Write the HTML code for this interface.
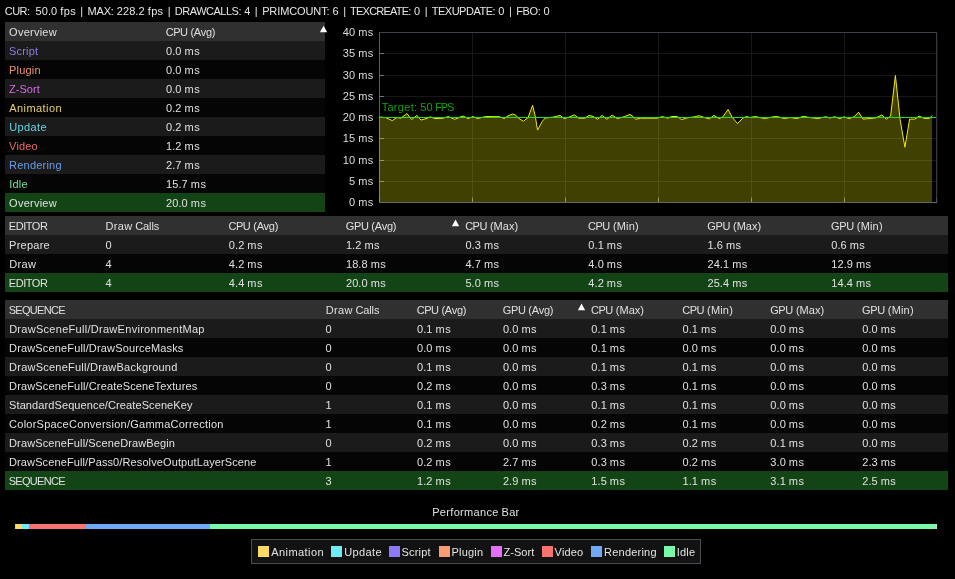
<!DOCTYPE html><html><head><meta charset="utf-8"><style>
html,body{margin:0;padding:0;background:#000;width:955px;height:579px;overflow:hidden}
body{position:relative;font-family:"Liberation Sans",sans-serif;font-size:11px}
#w{position:absolute;left:0;top:0;width:955px;height:579px;will-change:transform}
.tri{position:absolute;width:0;height:0;border-left:3.6px solid transparent;border-right:3.6px solid transparent;border-bottom:6.5px solid #fff}
.t{position:absolute;white-space:pre;line-height:13px}
.t i{position:absolute;font-style:normal;top:0}
</style></head><body><div id="w">
<div style="position:absolute;left:5px;top:22px;width:320px;height:19px;background:#303030"></div>
<svg style="position:absolute;left:0;top:0;overflow:visible" width="1" height="1"><polygon points="319.90,32.30 327.20,32.30 323.55,25.70" fill="#fff"/></svg>
<div style="position:absolute;left:5px;top:41px;width:320px;height:19px;background:#1b1b1b"></div>
<div style="position:absolute;left:5px;top:60px;width:320px;height:19px;background:#050505"></div>
<div style="position:absolute;left:5px;top:79px;width:320px;height:19px;background:#1b1b1b"></div>
<div style="position:absolute;left:5px;top:98px;width:320px;height:19px;background:#050505"></div>
<div style="position:absolute;left:5px;top:117px;width:320px;height:19px;background:#1b1b1b"></div>
<div style="position:absolute;left:5px;top:136px;width:320px;height:19px;background:#050505"></div>
<div style="position:absolute;left:5px;top:155px;width:320px;height:19px;background:#1b1b1b"></div>
<div style="position:absolute;left:5px;top:174px;width:320px;height:19px;background:#050505"></div>
<div style="position:absolute;left:5px;top:193px;width:320px;height:19px;background:#134415"></div>
<div style="position:absolute;left:5px;top:216px;width:943px;height:19px;background:#303030"></div>
<svg style="position:absolute;left:0;top:0;overflow:visible" width="1" height="1"><polygon points="451.90,226.20 459.20,226.20 455.55,219.60" fill="#fff"/></svg>
<div style="position:absolute;left:5px;top:235px;width:943px;height:19px;background:#1b1b1b"></div>
<div style="position:absolute;left:5px;top:254px;width:943px;height:19px;background:#050505"></div>
<div style="position:absolute;left:5px;top:273px;width:943px;height:19px;background:#134415"></div>
<div style="position:absolute;left:5px;top:300px;width:943px;height:19px;background:#303030"></div>
<svg style="position:absolute;left:0;top:0;overflow:visible" width="1" height="1"><polygon points="577.90,310.20 585.20,310.20 581.55,303.60" fill="#fff"/></svg>
<div style="position:absolute;left:5px;top:319px;width:943px;height:19px;background:#1b1b1b"></div>
<div style="position:absolute;left:5px;top:338px;width:943px;height:19px;background:#050505"></div>
<div style="position:absolute;left:5px;top:357px;width:943px;height:19px;background:#1b1b1b"></div>
<div style="position:absolute;left:5px;top:376px;width:943px;height:19px;background:#050505"></div>
<div style="position:absolute;left:5px;top:395px;width:943px;height:19px;background:#1b1b1b"></div>
<div style="position:absolute;left:5px;top:414px;width:943px;height:19px;background:#050505"></div>
<div style="position:absolute;left:5px;top:433px;width:943px;height:19px;background:#1b1b1b"></div>
<div style="position:absolute;left:5px;top:452px;width:943px;height:19px;background:#050505"></div>
<div style="position:absolute;left:5px;top:471px;width:943px;height:19px;background:#134415"></div>
<svg style="position:absolute;left:0;top:0" width="955" height="579">
<line x1="379" y1="181.5" x2="936" y2="181.5" stroke="#171717"/>
<line x1="379" y1="160.5" x2="936" y2="160.5" stroke="#171717"/>
<line x1="379" y1="138.5" x2="936" y2="138.5" stroke="#171717"/>
<line x1="379" y1="117.5" x2="936" y2="117.5" stroke="#171717"/>
<line x1="379" y1="96.5" x2="936" y2="96.5" stroke="#171717"/>
<line x1="379" y1="75.5" x2="936" y2="75.5" stroke="#171717"/>
<line x1="379" y1="53.5" x2="936" y2="53.5" stroke="#171717"/>
<line x1="472.5" y1="32" x2="472.5" y2="202" stroke="#171717"/>
<line x1="565.5" y1="32" x2="565.5" y2="202" stroke="#171717"/>
<line x1="658.5" y1="32" x2="658.5" y2="202" stroke="#171717"/>
<line x1="751.5" y1="32" x2="751.5" y2="202" stroke="#171717"/>
<line x1="844.5" y1="32" x2="844.5" y2="202" stroke="#171717"/>
<line x1="379.5" y1="32" x2="379.5" y2="203" stroke="#5c5c66"/>
<line x1="379" y1="202.5" x2="384" y2="202.5" stroke="#74747a"/>
<line x1="379" y1="181.5" x2="384" y2="181.5" stroke="#74747a"/>
<line x1="379" y1="160.5" x2="384" y2="160.5" stroke="#74747a"/>
<line x1="379" y1="138.5" x2="384" y2="138.5" stroke="#74747a"/>
<line x1="379" y1="117.5" x2="384" y2="117.5" stroke="#74747a"/>
<line x1="379" y1="96.5" x2="384" y2="96.5" stroke="#74747a"/>
<line x1="379" y1="75.5" x2="384" y2="75.5" stroke="#74747a"/>
<line x1="379" y1="53.5" x2="384" y2="53.5" stroke="#74747a"/>
<line x1="379" y1="32.5" x2="384" y2="32.5" stroke="#74747a"/>
<line x1="379.5" y1="197.5" x2="379.5" y2="202.5" stroke="#74747a"/>
<line x1="472.5" y1="197.5" x2="472.5" y2="202.5" stroke="#74747a"/>
<line x1="565.5" y1="197.5" x2="565.5" y2="202.5" stroke="#74747a"/>
<line x1="658.5" y1="197.5" x2="658.5" y2="202.5" stroke="#74747a"/>
<line x1="751.5" y1="197.5" x2="751.5" y2="202.5" stroke="#74747a"/>
<line x1="844.5" y1="197.5" x2="844.5" y2="202.5" stroke="#74747a"/>
<line x1="936.5" y1="197.5" x2="936.5" y2="202.5" stroke="#74747a"/>
<polygon points="379,202 379,117.0 379.5,117.0 385.5,117.5 392.3,120.6 397.0,117.5 400.7,118.2 407.0,113.6 411.6,119.6 416.9,115.4 421.0,120.1 427.4,118.2 430.5,116.8 434.7,118.6 443.0,118.2 448.3,116.5 454.6,119.3 463.0,116.0 468.2,118.6 473.1,116.5 477.3,118.6 485.7,116.5 499.3,116.7 504.6,118.6 506.6,116.5 512.9,114.0 516.0,115.4 518.2,118.0 523.4,121.2 528.1,117.5 532.6,105.3 535.4,117.0 537.5,130.1 542.3,121.2 545.4,118.0 553.8,117.0 560.0,115.4 564.2,118.6 569.2,117.0 574.4,114.9 578.6,118.2 584.9,118.2 589.1,115.4 593.3,116.5 597.5,119.3 602.2,115.4 606.9,119.3 612.1,115.1 617.4,118.6 624.7,116.5 629.9,114.4 633.1,116.5 635.7,119.3 640.4,118.2 657.1,118.2 662.4,116.5 667.9,118.2 671.5,116.5 677.3,116.5 681.5,119.6 687.2,117.8 694.6,116.8 699.3,115.7 702.9,117.0 709.2,118.9 713.9,115.4 719.2,118.6 722.8,116.8 728.1,109.5 732.3,117.5 737.5,123.5 742.7,118.2 746.4,116.5 750.0,117.5 755.3,116.5 764.4,118.6 773.8,116.7 778.0,116.7 784.3,118.6 790.0,117.5 796.9,118.6 803.2,116.3 808.0,117.2 817.8,118.6 825.7,116.7 830.0,118.0 834.6,116.7 839.8,118.6 844.0,116.8 849.2,118.6 854.3,116.7 858.6,112.2 863.0,119.1 867.3,118.7 875.9,117.9 882.0,114.9 886.3,119.2 890.6,116.1 895.4,75.5 900.1,119.6 904.9,147.2 909.6,119.1 914.8,119.1 919.1,116.1 924.3,118.4 929.5,118.4 932.0,115.6 932.0,202" fill="rgba(255,255,0,0.25)"/>
<polyline points="379.5,117.0 385.5,117.5 392.3,120.6 397.0,117.5 400.7,118.2 407.0,113.6 411.6,119.6 416.9,115.4 421.0,120.1 427.4,118.2 430.5,116.8 434.7,118.6 443.0,118.2 448.3,116.5 454.6,119.3 463.0,116.0 468.2,118.6 473.1,116.5 477.3,118.6 485.7,116.5 499.3,116.7 504.6,118.6 506.6,116.5 512.9,114.0 516.0,115.4 518.2,118.0 523.4,121.2 528.1,117.5 532.6,105.3 535.4,117.0 537.5,130.1 542.3,121.2 545.4,118.0 553.8,117.0 560.0,115.4 564.2,118.6 569.2,117.0 574.4,114.9 578.6,118.2 584.9,118.2 589.1,115.4 593.3,116.5 597.5,119.3 602.2,115.4 606.9,119.3 612.1,115.1 617.4,118.6 624.7,116.5 629.9,114.4 633.1,116.5 635.7,119.3 640.4,118.2 657.1,118.2 662.4,116.5 667.9,118.2 671.5,116.5 677.3,116.5 681.5,119.6 687.2,117.8 694.6,116.8 699.3,115.7 702.9,117.0 709.2,118.9 713.9,115.4 719.2,118.6 722.8,116.8 728.1,109.5 732.3,117.5 737.5,123.5 742.7,118.2 746.4,116.5 750.0,117.5 755.3,116.5 764.4,118.6 773.8,116.7 778.0,116.7 784.3,118.6 790.0,117.5 796.9,118.6 803.2,116.3 808.0,117.2 817.8,118.6 825.7,116.7 830.0,118.0 834.6,116.7 839.8,118.6 844.0,116.8 849.2,118.6 854.3,116.7 858.6,112.2 863.0,119.1 867.3,118.7 875.9,117.9 882.0,114.9 886.3,119.2 890.6,116.1 895.4,75.5 900.1,119.6 904.9,147.2 909.6,119.1 914.8,119.1 919.1,116.1 924.3,118.4 929.5,118.4 932.0,115.6" fill="none" stroke="#f2ec00" stroke-width="1.0" stroke-linejoin="round"/>
<line x1="379" y1="117.5" x2="936" y2="117.5" stroke="#1ee01e" stroke-width="1.2"/>
<line x1="379" y1="32.5" x2="937" y2="32.5" stroke="#40404a"/>
<line x1="936.7" y1="32" x2="936.7" y2="203" stroke="#464650"/>
<line x1="379" y1="202.5" x2="937" y2="202.5" stroke="#686868"/>
</svg>
<div style="position:absolute;left:15px;top:524px;width:7.1px;height:5px;background:#fad964"></div>
<div style="position:absolute;left:22.1px;top:524px;width:7.3px;height:5px;background:#70ecf8"></div>
<div style="position:absolute;left:29.4px;top:524px;width:56.5px;height:5px;background:#f87272"></div>
<div style="position:absolute;left:85.9px;top:524px;width:123.9px;height:5px;background:#70a8f8"></div>
<div style="position:absolute;left:209.8px;top:524px;width:727.2px;height:5px;background:#78f8a8"></div>
<div style="position:absolute;left:15px;top:524px;width:1px;height:5px;background:#d6cc90"></div>
<div style="position:absolute;left:936px;top:524px;width:1px;height:5px;background:#b4e6c6"></div>
<div style="position:absolute;left:251px;top:539px;width:448px;height:23px;border:1px solid #4a4a52;background:#121212"></div>
<div style="position:absolute;left:258px;top:546px;width:11px;height:11px;background:#fad964"></div>
<div style="position:absolute;left:331px;top:546px;width:11px;height:11px;background:#70ecf8"></div>
<div style="position:absolute;left:389px;top:546px;width:11px;height:11px;background:#8f78f8"></div>
<div style="position:absolute;left:439px;top:546px;width:11px;height:11px;background:#f89c74"></div>
<div style="position:absolute;left:491px;top:546px;width:11px;height:11px;background:#e470f8"></div>
<div style="position:absolute;left:542px;top:546px;width:11px;height:11px;background:#f87272"></div>
<div style="position:absolute;left:591px;top:546px;width:11px;height:11px;background:#70a8f8"></div>
<div style="position:absolute;left:664px;top:546px;width:11px;height:11px;background:#78f8a8"></div>
<div class="t" style="left:5.00px;top:5.00px;color:#e6e6e6"><i style="left:-0.26px;letter-spacing:-0.527px">CUR:</i><i style="left:30.54px;letter-spacing:0.094px">50.0</i><i style="left:55.32px;letter-spacing:0.343px">fps</i><i style="left:75.32px;letter-spacing:3.199px">|</i><i style="left:82.54px;letter-spacing:-0.190px">MAX:</i><i style="left:111.70px;letter-spacing:0.111px">228.2</i><i style="left:142.76px;letter-spacing:0.343px">fps</i><i style="left:162.76px;letter-spacing:3.199px">|</i><i style="left:169.83px;letter-spacing:-0.492px">DRAWCALLS:</i><i style="left:239.21px;letter-spacing:0.165px">4</i><i style="left:249.87px;letter-spacing:3.199px">|</i><i style="left:257.14px;letter-spacing:-0.107px">PRIMCOUNT:</i><i style="left:327.51px;letter-spacing:0.165px">6</i><i style="left:338.17px;letter-spacing:3.199px">|</i><i style="left:345.10px;letter-spacing:-0.772px">TEXCREATE:</i><i style="left:408.97px;letter-spacing:0.165px">0</i><i style="left:419.64px;letter-spacing:3.199px">|</i><i style="left:426.71px;letter-spacing:-0.482px">TEXUPDATE:</i><i style="left:493.34px;letter-spacing:0.165px">0</i><i style="left:504.00px;letter-spacing:3.199px">|</i><i style="left:511.15px;letter-spacing:-0.343px">FBO:</i><i style="left:538.56px;letter-spacing:0.165px">0</i></div>
<div class="t" style="left:9.12px;top:26.00px;color:#e0e0e0;letter-spacing:0.240px">Overview</div>
<div class="t" style="left:166.00px;top:26.00px;color:#e0e0e0"><i style="left:-0.26px;letter-spacing:-0.519px">CPU</i><i style="left:24.42px;letter-spacing:-0.239px">(Avg)</i></div>
<div class="t" style="left:9.09px;top:45.00px;color:#8c7ce8;letter-spacing:0.174px">Script</div>
<div class="t" style="left:166.00px;top:45.00px;color:#e0e0e0"><i style="left:0.03px;letter-spacing:0.070px">0.0</i><i style="left:18.57px;letter-spacing:0.404px">ms</i></div>
<div class="t" style="left:9.09px;top:64.00px;color:#eb9472;letter-spacing:0.190px">Plugin</div>
<div class="t" style="left:166.00px;top:64.00px;color:#e0e0e0"><i style="left:0.03px;letter-spacing:0.070px">0.0</i><i style="left:18.57px;letter-spacing:0.404px">ms</i></div>
<div class="t" style="left:9.02px;top:83.00px;color:#d86ae8;letter-spacing:0.046px">Z-Sort</div>
<div class="t" style="left:166.00px;top:83.00px;color:#e0e0e0"><i style="left:0.03px;letter-spacing:0.070px">0.0</i><i style="left:18.57px;letter-spacing:0.404px">ms</i></div>
<div class="t" style="left:9.22px;top:102.00px;color:#e8d070;letter-spacing:0.443px">Animation</div>
<div class="t" style="left:166.00px;top:102.00px;color:#e0e0e0"><i style="left:0.03px;letter-spacing:0.070px">0.2</i><i style="left:18.57px;letter-spacing:0.404px">ms</i></div>
<div class="t" style="left:9.19px;top:121.00px;color:#66d4e4;letter-spacing:0.381px">Update</div>
<div class="t" style="left:166.00px;top:121.00px;color:#e0e0e0"><i style="left:0.03px;letter-spacing:0.070px">0.2</i><i style="left:18.57px;letter-spacing:0.404px">ms</i></div>
<div class="t" style="left:9.09px;top:140.00px;color:#e86a6a;letter-spacing:0.182px">Video</div>
<div class="t" style="left:166.00px;top:140.00px;color:#e0e0e0"><i style="left:0.03px;letter-spacing:0.070px">1.2</i><i style="left:18.57px;letter-spacing:0.404px">ms</i></div>
<div class="t" style="left:9.11px;top:159.00px;color:#6a9ce8;letter-spacing:0.213px">Rendering</div>
<div class="t" style="left:166.00px;top:159.00px;color:#e0e0e0"><i style="left:0.03px;letter-spacing:0.070px">2.7</i><i style="left:18.57px;letter-spacing:0.404px">ms</i></div>
<div class="t" style="left:9.13px;top:178.00px;color:#72e29a;letter-spacing:0.253px">Idle</div>
<div class="t" style="left:166.00px;top:178.00px;color:#e0e0e0"><i style="left:0.05px;letter-spacing:0.094px">15.7</i><i style="left:24.86px;letter-spacing:0.404px">ms</i></div>
<div class="t" style="left:9.12px;top:197.00px;color:#e0e0e0;letter-spacing:0.240px">Overview</div>
<div class="t" style="left:166.00px;top:197.00px;color:#e0e0e0"><i style="left:0.05px;letter-spacing:0.094px">20.0</i><i style="left:24.86px;letter-spacing:0.404px">ms</i></div>
<div class="t" style="left:8.78px;top:220.00px;color:#e0e0e0;letter-spacing:-0.445px">EDITOR</div>
<div class="t" style="left:105.30px;top:220.00px;color:#e0e0e0"><i style="left:0.19px;letter-spacing:0.378px">Draw</i><i style="left:29.98px;letter-spacing:-0.117px">Calls</i></div>
<div class="t" style="left:228.80px;top:220.00px;color:#e0e0e0"><i style="left:-0.26px;letter-spacing:-0.519px">CPU</i><i style="left:24.42px;letter-spacing:-0.239px">(Avg)</i></div>
<div class="t" style="left:345.90px;top:220.00px;color:#e0e0e0"><i style="left:-0.18px;letter-spacing:-0.366px">GPU</i><i style="left:25.48px;letter-spacing:-0.239px">(Avg)</i></div>
<div class="t" style="left:465.40px;top:220.00px;color:#e0e0e0"><i style="left:-0.26px;letter-spacing:-0.519px">CPU</i><i style="left:24.55px;letter-spacing:0.021px">(Max)</i></div>
<div class="t" style="left:588.30px;top:220.00px;color:#e0e0e0"><i style="left:-0.26px;letter-spacing:-0.519px">CPU</i><i style="left:24.62px;letter-spacing:0.161px">(Min)</i></div>
<div class="t" style="left:707.40px;top:220.00px;color:#e0e0e0"><i style="left:-0.18px;letter-spacing:-0.366px">GPU</i><i style="left:25.61px;letter-spacing:0.021px">(Max)</i></div>
<div class="t" style="left:831.20px;top:220.00px;color:#e0e0e0"><i style="left:-0.18px;letter-spacing:-0.366px">GPU</i><i style="left:25.68px;letter-spacing:0.161px">(Min)</i></div>
<div class="t" style="left:9.12px;top:239.00px;color:#e0e0e0;letter-spacing:0.238px">Prepare</div>
<div class="t" style="left:105.38px;top:239.00px;color:#e0e0e0;letter-spacing:0.165px">0</div>
<div class="t" style="left:228.80px;top:239.00px;color:#e0e0e0"><i style="left:0.03px;letter-spacing:0.070px">0.2</i><i style="left:18.57px;letter-spacing:0.404px">ms</i></div>
<div class="t" style="left:345.90px;top:239.00px;color:#e0e0e0"><i style="left:0.03px;letter-spacing:0.070px">1.2</i><i style="left:18.57px;letter-spacing:0.404px">ms</i></div>
<div class="t" style="left:465.40px;top:239.00px;color:#e0e0e0"><i style="left:0.03px;letter-spacing:0.070px">0.3</i><i style="left:18.57px;letter-spacing:0.404px">ms</i></div>
<div class="t" style="left:588.30px;top:239.00px;color:#e0e0e0"><i style="left:0.03px;letter-spacing:0.070px">0.1</i><i style="left:18.57px;letter-spacing:0.404px">ms</i></div>
<div class="t" style="left:707.40px;top:239.00px;color:#e0e0e0"><i style="left:0.03px;letter-spacing:0.070px">1.6</i><i style="left:18.57px;letter-spacing:0.404px">ms</i></div>
<div class="t" style="left:831.20px;top:239.00px;color:#e0e0e0"><i style="left:0.03px;letter-spacing:0.070px">0.6</i><i style="left:18.57px;letter-spacing:0.404px">ms</i></div>
<div class="t" style="left:9.19px;top:258.00px;color:#e0e0e0;letter-spacing:0.378px">Draw</div>
<div class="t" style="left:105.38px;top:258.00px;color:#e0e0e0;letter-spacing:0.165px">4</div>
<div class="t" style="left:228.80px;top:258.00px;color:#e0e0e0"><i style="left:0.03px;letter-spacing:0.070px">4.2</i><i style="left:18.57px;letter-spacing:0.404px">ms</i></div>
<div class="t" style="left:345.90px;top:258.00px;color:#e0e0e0"><i style="left:0.05px;letter-spacing:0.094px">18.8</i><i style="left:24.86px;letter-spacing:0.404px">ms</i></div>
<div class="t" style="left:465.40px;top:258.00px;color:#e0e0e0"><i style="left:0.03px;letter-spacing:0.070px">4.7</i><i style="left:18.57px;letter-spacing:0.404px">ms</i></div>
<div class="t" style="left:588.30px;top:258.00px;color:#e0e0e0"><i style="left:0.03px;letter-spacing:0.070px">4.0</i><i style="left:18.57px;letter-spacing:0.404px">ms</i></div>
<div class="t" style="left:707.40px;top:258.00px;color:#e0e0e0"><i style="left:0.05px;letter-spacing:0.094px">24.1</i><i style="left:24.86px;letter-spacing:0.404px">ms</i></div>
<div class="t" style="left:831.20px;top:258.00px;color:#e0e0e0"><i style="left:0.05px;letter-spacing:0.094px">12.9</i><i style="left:24.86px;letter-spacing:0.404px">ms</i></div>
<div class="t" style="left:8.78px;top:277.00px;color:#e0e0e0;letter-spacing:-0.445px">EDITOR</div>
<div class="t" style="left:105.38px;top:277.00px;color:#e0e0e0;letter-spacing:0.165px">4</div>
<div class="t" style="left:228.80px;top:277.00px;color:#e0e0e0"><i style="left:0.03px;letter-spacing:0.070px">4.4</i><i style="left:18.57px;letter-spacing:0.404px">ms</i></div>
<div class="t" style="left:345.90px;top:277.00px;color:#e0e0e0"><i style="left:0.05px;letter-spacing:0.094px">20.0</i><i style="left:24.86px;letter-spacing:0.404px">ms</i></div>
<div class="t" style="left:465.40px;top:277.00px;color:#e0e0e0"><i style="left:0.03px;letter-spacing:0.070px">5.0</i><i style="left:18.57px;letter-spacing:0.404px">ms</i></div>
<div class="t" style="left:588.30px;top:277.00px;color:#e0e0e0"><i style="left:0.03px;letter-spacing:0.070px">4.2</i><i style="left:18.57px;letter-spacing:0.404px">ms</i></div>
<div class="t" style="left:707.40px;top:277.00px;color:#e0e0e0"><i style="left:0.05px;letter-spacing:0.094px">25.4</i><i style="left:24.86px;letter-spacing:0.404px">ms</i></div>
<div class="t" style="left:831.20px;top:277.00px;color:#e0e0e0"><i style="left:0.05px;letter-spacing:0.094px">14.4</i><i style="left:24.86px;letter-spacing:0.404px">ms</i></div>
<div class="t" style="left:8.66px;top:304.00px;color:#e0e0e0;letter-spacing:-0.681px">SEQUENCE</div>
<div class="t" style="left:325.50px;top:304.00px;color:#e0e0e0"><i style="left:0.19px;letter-spacing:0.378px">Draw</i><i style="left:29.98px;letter-spacing:-0.117px">Calls</i></div>
<div class="t" style="left:417.00px;top:304.00px;color:#e0e0e0"><i style="left:-0.26px;letter-spacing:-0.519px">CPU</i><i style="left:24.42px;letter-spacing:-0.239px">(Avg)</i></div>
<div class="t" style="left:502.90px;top:304.00px;color:#e0e0e0"><i style="left:-0.18px;letter-spacing:-0.366px">GPU</i><i style="left:25.48px;letter-spacing:-0.239px">(Avg)</i></div>
<div class="t" style="left:591.30px;top:304.00px;color:#e0e0e0"><i style="left:-0.26px;letter-spacing:-0.519px">CPU</i><i style="left:24.55px;letter-spacing:0.021px">(Max)</i></div>
<div class="t" style="left:682.50px;top:304.00px;color:#e0e0e0"><i style="left:-0.26px;letter-spacing:-0.519px">CPU</i><i style="left:24.62px;letter-spacing:0.161px">(Min)</i></div>
<div class="t" style="left:770.30px;top:304.00px;color:#e0e0e0"><i style="left:-0.18px;letter-spacing:-0.366px">GPU</i><i style="left:25.61px;letter-spacing:0.021px">(Max)</i></div>
<div class="t" style="left:862.20px;top:304.00px;color:#e0e0e0"><i style="left:-0.18px;letter-spacing:-0.366px">GPU</i><i style="left:25.68px;letter-spacing:0.161px">(Min)</i></div>
<div class="t" style="left:9.14px;top:323.00px;color:#e0e0e0;letter-spacing:0.287px">DrawSceneFull/DrawEnvironmentMap</div>
<div class="t" style="left:325.58px;top:323.00px;color:#e0e0e0;letter-spacing:0.165px">0</div>
<div class="t" style="left:417.00px;top:323.00px;color:#e0e0e0"><i style="left:0.03px;letter-spacing:0.070px">0.1</i><i style="left:18.57px;letter-spacing:0.404px">ms</i></div>
<div class="t" style="left:502.90px;top:323.00px;color:#e0e0e0"><i style="left:0.03px;letter-spacing:0.070px">0.0</i><i style="left:18.57px;letter-spacing:0.404px">ms</i></div>
<div class="t" style="left:591.30px;top:323.00px;color:#e0e0e0"><i style="left:0.03px;letter-spacing:0.070px">0.1</i><i style="left:18.57px;letter-spacing:0.404px">ms</i></div>
<div class="t" style="left:682.50px;top:323.00px;color:#e0e0e0"><i style="left:0.03px;letter-spacing:0.070px">0.1</i><i style="left:18.57px;letter-spacing:0.404px">ms</i></div>
<div class="t" style="left:770.30px;top:323.00px;color:#e0e0e0"><i style="left:0.03px;letter-spacing:0.070px">0.0</i><i style="left:18.57px;letter-spacing:0.404px">ms</i></div>
<div class="t" style="left:862.20px;top:323.00px;color:#e0e0e0"><i style="left:0.03px;letter-spacing:0.070px">0.0</i><i style="left:18.57px;letter-spacing:0.404px">ms</i></div>
<div class="t" style="left:9.08px;top:342.00px;color:#e0e0e0;letter-spacing:0.154px">DrawSceneFull/DrawSourceMasks</div>
<div class="t" style="left:325.58px;top:342.00px;color:#e0e0e0;letter-spacing:0.165px">0</div>
<div class="t" style="left:417.00px;top:342.00px;color:#e0e0e0"><i style="left:0.03px;letter-spacing:0.070px">0.0</i><i style="left:18.57px;letter-spacing:0.404px">ms</i></div>
<div class="t" style="left:502.90px;top:342.00px;color:#e0e0e0"><i style="left:0.03px;letter-spacing:0.070px">0.0</i><i style="left:18.57px;letter-spacing:0.404px">ms</i></div>
<div class="t" style="left:591.30px;top:342.00px;color:#e0e0e0"><i style="left:0.03px;letter-spacing:0.070px">0.1</i><i style="left:18.57px;letter-spacing:0.404px">ms</i></div>
<div class="t" style="left:682.50px;top:342.00px;color:#e0e0e0"><i style="left:0.03px;letter-spacing:0.070px">0.0</i><i style="left:18.57px;letter-spacing:0.404px">ms</i></div>
<div class="t" style="left:770.30px;top:342.00px;color:#e0e0e0"><i style="left:0.03px;letter-spacing:0.070px">0.0</i><i style="left:18.57px;letter-spacing:0.404px">ms</i></div>
<div class="t" style="left:862.20px;top:342.00px;color:#e0e0e0"><i style="left:0.03px;letter-spacing:0.070px">0.0</i><i style="left:18.57px;letter-spacing:0.404px">ms</i></div>
<div class="t" style="left:9.11px;top:361.00px;color:#e0e0e0;letter-spacing:0.229px">DrawSceneFull/DrawBackground</div>
<div class="t" style="left:325.58px;top:361.00px;color:#e0e0e0;letter-spacing:0.165px">0</div>
<div class="t" style="left:417.00px;top:361.00px;color:#e0e0e0"><i style="left:0.03px;letter-spacing:0.070px">0.1</i><i style="left:18.57px;letter-spacing:0.404px">ms</i></div>
<div class="t" style="left:502.90px;top:361.00px;color:#e0e0e0"><i style="left:0.03px;letter-spacing:0.070px">0.0</i><i style="left:18.57px;letter-spacing:0.404px">ms</i></div>
<div class="t" style="left:591.30px;top:361.00px;color:#e0e0e0"><i style="left:0.03px;letter-spacing:0.070px">0.1</i><i style="left:18.57px;letter-spacing:0.404px">ms</i></div>
<div class="t" style="left:682.50px;top:361.00px;color:#e0e0e0"><i style="left:0.03px;letter-spacing:0.070px">0.1</i><i style="left:18.57px;letter-spacing:0.404px">ms</i></div>
<div class="t" style="left:770.30px;top:361.00px;color:#e0e0e0"><i style="left:0.03px;letter-spacing:0.070px">0.0</i><i style="left:18.57px;letter-spacing:0.404px">ms</i></div>
<div class="t" style="left:862.20px;top:361.00px;color:#e0e0e0"><i style="left:0.03px;letter-spacing:0.070px">0.0</i><i style="left:18.57px;letter-spacing:0.404px">ms</i></div>
<div class="t" style="left:9.07px;top:380.00px;color:#e0e0e0;letter-spacing:0.148px">DrawSceneFull/CreateSceneTextures</div>
<div class="t" style="left:325.58px;top:380.00px;color:#e0e0e0;letter-spacing:0.165px">0</div>
<div class="t" style="left:417.00px;top:380.00px;color:#e0e0e0"><i style="left:0.03px;letter-spacing:0.070px">0.2</i><i style="left:18.57px;letter-spacing:0.404px">ms</i></div>
<div class="t" style="left:502.90px;top:380.00px;color:#e0e0e0"><i style="left:0.03px;letter-spacing:0.070px">0.0</i><i style="left:18.57px;letter-spacing:0.404px">ms</i></div>
<div class="t" style="left:591.30px;top:380.00px;color:#e0e0e0"><i style="left:0.03px;letter-spacing:0.070px">0.3</i><i style="left:18.57px;letter-spacing:0.404px">ms</i></div>
<div class="t" style="left:682.50px;top:380.00px;color:#e0e0e0"><i style="left:0.03px;letter-spacing:0.070px">0.1</i><i style="left:18.57px;letter-spacing:0.404px">ms</i></div>
<div class="t" style="left:770.30px;top:380.00px;color:#e0e0e0"><i style="left:0.03px;letter-spacing:0.070px">0.0</i><i style="left:18.57px;letter-spacing:0.404px">ms</i></div>
<div class="t" style="left:862.20px;top:380.00px;color:#e0e0e0"><i style="left:0.03px;letter-spacing:0.070px">0.0</i><i style="left:18.57px;letter-spacing:0.404px">ms</i></div>
<div class="t" style="left:9.05px;top:399.00px;color:#e0e0e0;letter-spacing:0.101px">StandardSequence/CreateSceneKey</div>
<div class="t" style="left:325.58px;top:399.00px;color:#e0e0e0;letter-spacing:0.165px">1</div>
<div class="t" style="left:417.00px;top:399.00px;color:#e0e0e0"><i style="left:0.03px;letter-spacing:0.070px">0.1</i><i style="left:18.57px;letter-spacing:0.404px">ms</i></div>
<div class="t" style="left:502.90px;top:399.00px;color:#e0e0e0"><i style="left:0.03px;letter-spacing:0.070px">0.0</i><i style="left:18.57px;letter-spacing:0.404px">ms</i></div>
<div class="t" style="left:591.30px;top:399.00px;color:#e0e0e0"><i style="left:0.03px;letter-spacing:0.070px">0.1</i><i style="left:18.57px;letter-spacing:0.404px">ms</i></div>
<div class="t" style="left:682.50px;top:399.00px;color:#e0e0e0"><i style="left:0.03px;letter-spacing:0.070px">0.1</i><i style="left:18.57px;letter-spacing:0.404px">ms</i></div>
<div class="t" style="left:770.30px;top:399.00px;color:#e0e0e0"><i style="left:0.03px;letter-spacing:0.070px">0.0</i><i style="left:18.57px;letter-spacing:0.404px">ms</i></div>
<div class="t" style="left:862.20px;top:399.00px;color:#e0e0e0"><i style="left:0.03px;letter-spacing:0.070px">0.0</i><i style="left:18.57px;letter-spacing:0.404px">ms</i></div>
<div class="t" style="left:9.12px;top:418.00px;color:#e0e0e0;letter-spacing:0.236px">ColorSpaceConversion/GammaCorrection</div>
<div class="t" style="left:325.58px;top:418.00px;color:#e0e0e0;letter-spacing:0.165px">1</div>
<div class="t" style="left:417.00px;top:418.00px;color:#e0e0e0"><i style="left:0.03px;letter-spacing:0.070px">0.1</i><i style="left:18.57px;letter-spacing:0.404px">ms</i></div>
<div class="t" style="left:502.90px;top:418.00px;color:#e0e0e0"><i style="left:0.03px;letter-spacing:0.070px">0.0</i><i style="left:18.57px;letter-spacing:0.404px">ms</i></div>
<div class="t" style="left:591.30px;top:418.00px;color:#e0e0e0"><i style="left:0.03px;letter-spacing:0.070px">0.2</i><i style="left:18.57px;letter-spacing:0.404px">ms</i></div>
<div class="t" style="left:682.50px;top:418.00px;color:#e0e0e0"><i style="left:0.03px;letter-spacing:0.070px">0.1</i><i style="left:18.57px;letter-spacing:0.404px">ms</i></div>
<div class="t" style="left:770.30px;top:418.00px;color:#e0e0e0"><i style="left:0.03px;letter-spacing:0.070px">0.0</i><i style="left:18.57px;letter-spacing:0.404px">ms</i></div>
<div class="t" style="left:862.20px;top:418.00px;color:#e0e0e0"><i style="left:0.03px;letter-spacing:0.070px">0.0</i><i style="left:18.57px;letter-spacing:0.404px">ms</i></div>
<div class="t" style="left:9.06px;top:437.00px;color:#e0e0e0;letter-spacing:0.120px">DrawSceneFull/SceneDrawBegin</div>
<div class="t" style="left:325.58px;top:437.00px;color:#e0e0e0;letter-spacing:0.165px">0</div>
<div class="t" style="left:417.00px;top:437.00px;color:#e0e0e0"><i style="left:0.03px;letter-spacing:0.070px">0.2</i><i style="left:18.57px;letter-spacing:0.404px">ms</i></div>
<div class="t" style="left:502.90px;top:437.00px;color:#e0e0e0"><i style="left:0.03px;letter-spacing:0.070px">0.0</i><i style="left:18.57px;letter-spacing:0.404px">ms</i></div>
<div class="t" style="left:591.30px;top:437.00px;color:#e0e0e0"><i style="left:0.03px;letter-spacing:0.070px">0.3</i><i style="left:18.57px;letter-spacing:0.404px">ms</i></div>
<div class="t" style="left:682.50px;top:437.00px;color:#e0e0e0"><i style="left:0.03px;letter-spacing:0.070px">0.2</i><i style="left:18.57px;letter-spacing:0.404px">ms</i></div>
<div class="t" style="left:770.30px;top:437.00px;color:#e0e0e0"><i style="left:0.03px;letter-spacing:0.070px">0.1</i><i style="left:18.57px;letter-spacing:0.404px">ms</i></div>
<div class="t" style="left:862.20px;top:437.00px;color:#e0e0e0"><i style="left:0.03px;letter-spacing:0.070px">0.0</i><i style="left:18.57px;letter-spacing:0.404px">ms</i></div>
<div class="t" style="left:9.05px;top:456.00px;color:#e0e0e0;letter-spacing:0.109px">DrawSceneFull/Pass0/ResolveOutputLayerScene</div>
<div class="t" style="left:325.58px;top:456.00px;color:#e0e0e0;letter-spacing:0.165px">1</div>
<div class="t" style="left:417.00px;top:456.00px;color:#e0e0e0"><i style="left:0.03px;letter-spacing:0.070px">0.2</i><i style="left:18.57px;letter-spacing:0.404px">ms</i></div>
<div class="t" style="left:502.90px;top:456.00px;color:#e0e0e0"><i style="left:0.03px;letter-spacing:0.070px">2.7</i><i style="left:18.57px;letter-spacing:0.404px">ms</i></div>
<div class="t" style="left:591.30px;top:456.00px;color:#e0e0e0"><i style="left:0.03px;letter-spacing:0.070px">0.3</i><i style="left:18.57px;letter-spacing:0.404px">ms</i></div>
<div class="t" style="left:682.50px;top:456.00px;color:#e0e0e0"><i style="left:0.03px;letter-spacing:0.070px">0.2</i><i style="left:18.57px;letter-spacing:0.404px">ms</i></div>
<div class="t" style="left:770.30px;top:456.00px;color:#e0e0e0"><i style="left:0.03px;letter-spacing:0.070px">3.0</i><i style="left:18.57px;letter-spacing:0.404px">ms</i></div>
<div class="t" style="left:862.20px;top:456.00px;color:#e0e0e0"><i style="left:0.03px;letter-spacing:0.070px">2.3</i><i style="left:18.57px;letter-spacing:0.404px">ms</i></div>
<div class="t" style="left:8.66px;top:475.00px;color:#e0e0e0;letter-spacing:-0.681px">SEQUENCE</div>
<div class="t" style="left:325.58px;top:475.00px;color:#e0e0e0;letter-spacing:0.165px">3</div>
<div class="t" style="left:417.00px;top:475.00px;color:#e0e0e0"><i style="left:0.03px;letter-spacing:0.070px">1.2</i><i style="left:18.57px;letter-spacing:0.404px">ms</i></div>
<div class="t" style="left:502.90px;top:475.00px;color:#e0e0e0"><i style="left:0.03px;letter-spacing:0.070px">2.9</i><i style="left:18.57px;letter-spacing:0.404px">ms</i></div>
<div class="t" style="left:591.30px;top:475.00px;color:#e0e0e0"><i style="left:0.03px;letter-spacing:0.070px">1.5</i><i style="left:18.57px;letter-spacing:0.404px">ms</i></div>
<div class="t" style="left:682.50px;top:475.00px;color:#e0e0e0"><i style="left:0.03px;letter-spacing:0.070px">1.1</i><i style="left:18.57px;letter-spacing:0.404px">ms</i></div>
<div class="t" style="left:770.30px;top:475.00px;color:#e0e0e0"><i style="left:0.03px;letter-spacing:0.070px">3.1</i><i style="left:18.57px;letter-spacing:0.404px">ms</i></div>
<div class="t" style="left:862.20px;top:475.00px;color:#e0e0e0"><i style="left:0.03px;letter-spacing:0.070px">2.5</i><i style="left:18.57px;letter-spacing:0.404px">ms</i></div>
<div class="t" style="left:342.58px;top:26.00px;color:#dcdcdc"><i style="left:0.08px;letter-spacing:0.165px">40</i><i style="left:15.64px;letter-spacing:0.404px">ms</i></div>
<div class="t" style="left:342.58px;top:47.25px;color:#dcdcdc"><i style="left:0.08px;letter-spacing:0.165px">35</i><i style="left:15.64px;letter-spacing:0.404px">ms</i></div>
<div class="t" style="left:342.58px;top:68.50px;color:#dcdcdc"><i style="left:0.08px;letter-spacing:0.165px">30</i><i style="left:15.64px;letter-spacing:0.404px">ms</i></div>
<div class="t" style="left:342.58px;top:89.75px;color:#dcdcdc"><i style="left:0.08px;letter-spacing:0.165px">25</i><i style="left:15.64px;letter-spacing:0.404px">ms</i></div>
<div class="t" style="left:342.58px;top:111.00px;color:#dcdcdc"><i style="left:0.08px;letter-spacing:0.165px">20</i><i style="left:15.64px;letter-spacing:0.404px">ms</i></div>
<div class="t" style="left:342.58px;top:132.25px;color:#dcdcdc"><i style="left:0.08px;letter-spacing:0.165px">15</i><i style="left:15.64px;letter-spacing:0.404px">ms</i></div>
<div class="t" style="left:342.58px;top:153.50px;color:#dcdcdc"><i style="left:0.08px;letter-spacing:0.165px">10</i><i style="left:15.64px;letter-spacing:0.404px">ms</i></div>
<div class="t" style="left:348.87px;top:174.75px;color:#dcdcdc"><i style="left:0.08px;letter-spacing:0.165px">5</i><i style="left:9.35px;letter-spacing:0.404px">ms</i></div>
<div class="t" style="left:348.87px;top:196.00px;color:#dcdcdc"><i style="left:0.08px;letter-spacing:0.165px">0</i><i style="left:9.35px;letter-spacing:0.404px">ms</i></div>
<div class="t" style="left:381.50px;top:101.00px;color:#12a012"><i style="left:0.15px;letter-spacing:0.299px">Target:</i><i style="left:38.67px;letter-spacing:0.165px">50</i><i style="left:53.52px;letter-spacing:-1.023px">FPS</i></div>
<div class="t" style="left:432.00px;top:506.00px;color:#e0e0e0"><i style="left:0.17px;letter-spacing:0.334px">Performance</i><i style="left:69.61px;letter-spacing:0.203px">Bar</i></div>
<div class="t" style="left:271.22px;top:546.00px;color:#e4e4e4;letter-spacing:0.443px">Animation</div>
<div class="t" style="left:344.19px;top:546.00px;color:#e4e4e4;letter-spacing:0.381px">Update</div>
<div class="t" style="left:401.59px;top:546.00px;color:#e4e4e4;letter-spacing:0.174px">Script</div>
<div class="t" style="left:451.59px;top:546.00px;color:#e4e4e4;letter-spacing:0.190px">Plugin</div>
<div class="t" style="left:503.52px;top:546.00px;color:#e4e4e4;letter-spacing:0.046px">Z-Sort</div>
<div class="t" style="left:554.59px;top:546.00px;color:#e4e4e4;letter-spacing:0.182px">Video</div>
<div class="t" style="left:604.11px;top:546.00px;color:#e4e4e4;letter-spacing:0.213px">Rendering</div>
<div class="t" style="left:676.63px;top:546.00px;color:#e4e4e4;letter-spacing:0.253px">Idle</div>
</div></body></html>
